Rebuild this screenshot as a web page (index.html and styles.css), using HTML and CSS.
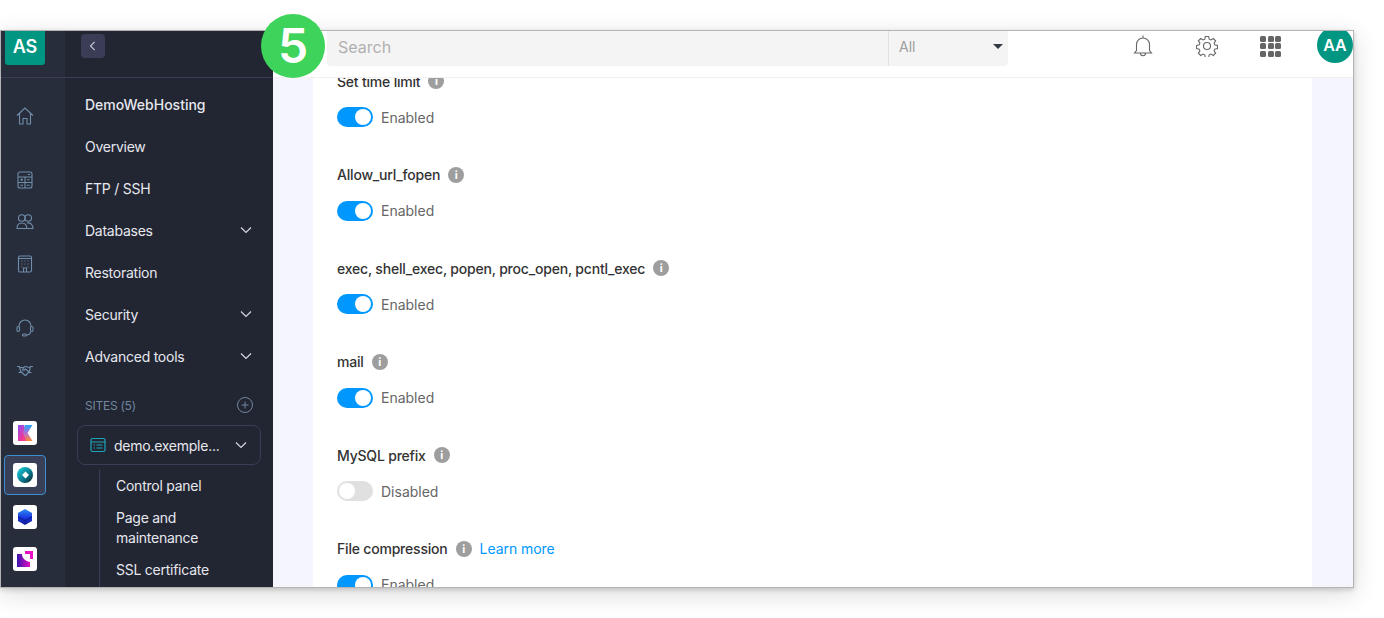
FILE: index.html
```html
<!DOCTYPE html>
<html lang="en">
<head>
    <meta charset="UTF-8">
    <meta name="viewport" content="width=device-width, initial-scale=1.0">
    <title>PHP settings</title>
    <link rel="stylesheet" href="styles.css">
</head>
<body>
    <div class="step-badge">5</div>
    <div class="window">
        <nav class="rail">
            <div class="rail-top"><div class="account-tile">AS</div></div>
            <div class="rail-icons">
                <svg class="rail-icon rail-home" viewBox="0 0 18 18"><path d="M1 8.500 9 1l8 7.500M3.500 6.500V17h3.500v-5.500h4V17h3.500V6.500"/></svg>
                <svg class="rail-icon" viewBox="0 0 18 18"><rect x="2" y="1" width="14" height="16" rx="2"/><path d="M2 6h14M2 11.500h14M9 6v11M4.500 8.700h2.500M11 8.700h2.500M5.700 7.500v2.500M4.500 14.200h2.500M11 14.200h2.500"/><path d="M12 3.500h2"/></svg>
                <svg class="rail-icon" viewBox="0 0 18 18"><circle cx="5.800" cy="5" r="3.300"/><circle cx="12.200" cy="5" r="3.300"/><path d="M1 15.500c0-3.500 2-5.500 4.800-5.500s5 2 5 5.500zM11 10c3.500-.5 6 1.500 6 5.500h-6"/></svg>
                <svg class="rail-icon rail-building" viewBox="0 0 18 18"><rect x="2.500" y="1" width="13" height="16" rx="1.500"/><path d="M2.500 3.500h13M5.500 6h1M8.500 6h1M11.500 6h1M5.500 9h1M8.500 9h1M11.500 9h1M5.500 12h1M11.500 12h1M7.500 17v-4h3v4"/></svg>
                <svg class="rail-icon" viewBox="0 0 18 18"><path d="M3 8V7a6 6 0 0 1 12 0v1M14.500 12.500c0 2.300-1.500 3.400-4 3.500"/><rect x="1" y="7.500" width="2.500" height="5" rx="1.200"/><rect x="14.500" y="7.500" width="2.500" height="5" rx="1.200"/><rect x="6.500" y="15" width="4" height="2" rx="1"/></svg>
                <svg class="rail-icon" viewBox="0 0 18 18"><path d="M1 5.500h2.500l1.500 6H2.500M17 5.500h-2.500l-1.500 6h2.500M3.800 6.500h3.700l1.500-1 5 1M5 10.500 8.500 14l1 .5 3.500-3.500M7.500 6.500 6.500 9c1 .5 2 0 3-1l3.500 3"/></svg>
            </div>
            <div class="rail-sites">
                <div class="site-tile-wrap">
                    <div class="site-tile">
                        <svg viewBox="0 0 16 16">
                            <defs>
                                <linearGradient id="kLeft" x1="0" y1="0" x2="1" y2="1"><stop offset="0" stop-color="#8f4df5"/><stop offset=".6" stop-color="#f0389c"/><stop offset="1" stop-color="#ff4f8a"/></linearGradient>
                                <linearGradient id="kRight" x1="0" y1="0" x2="0" y2="1"><stop offset="0" stop-color="#1fa8f5"/><stop offset=".5" stop-color="#b06ed8"/><stop offset="1" stop-color="#ff8a30"/></linearGradient>
                            </defs>
                            <path d="M1 0h6l5 16H1z" fill="url(#kLeft)"/>
                            <path d="M8 0h7.500L10.500 8l5 8H9.500L6 8z" fill="url(#kRight)"/>
                        </svg>
                    </div>
                </div>
                <div class="site-tile-wrap selected">
                    <div class="site-tile">
                        <svg viewBox="0 0 16 16">
                            <defs>
                                <linearGradient id="ringFill" x1="0" y1="0" x2="1" y2="1"><stop offset="0" stop-color="#1fd4dc"/><stop offset=".55" stop-color="#0a7d92"/><stop offset="1" stop-color="#0c1c28"/></linearGradient>
                            </defs>
                            <circle cx="8" cy="8" r="8" fill="url(#ringFill)"/>
                            <path d="M8.500 4.500 12 8l-3.500 3.500L5 8z" fill="#fff"/>
                        </svg>
                    </div>
                </div>
                <div class="site-tile-wrap">
                    <div class="site-tile">
                        <svg viewBox="0 0 16 16">
                            <defs>
                                <linearGradient id="hexFill" x1="0" y1="0" x2="0" y2="1"><stop offset="0" stop-color="#2f8df5"/><stop offset=".55" stop-color="#1a36e0"/><stop offset="1" stop-color="#101a8c"/></linearGradient>
                            </defs>
                            <path d="M8 0 15 4v8l-7 4-7-4V4z" fill="url(#hexFill)"/>
                            <path d="M1 7 8 11l7-4v1.500l-7 4-7-4z" fill="#0d1f9c"/>
                        </svg>
                    </div>
                </div>
                <div class="site-tile-wrap">
                    <div class="site-tile">
                        <svg viewBox="0 0 16 16">
                            <defs>
                                <linearGradient id="cornerFill" x1="0" y1="0" x2="1" y2="0"><stop offset="0" stop-color="#3a14b0"/><stop offset="1" stop-color="#e010c0"/></linearGradient>
                            </defs>
                            <path d="M8 0h8v8h-3V3H8z" fill="#e80fc4"/>
                            <path d="M0 3h5c0 4 3 7 8 8v5H0z" fill="url(#cornerFill)"/>
                        </svg>
                    </div>
                </div>
            </div>
        </nav>

        <aside class="sidebar">
            <div class="sidebar-top">
                <button class="back-btn"><svg viewBox="0 0 12 12"><path d="M8 1 3 6l5 5"/></svg></button>
            </div>
            <ul class="menu">
                <li class="menu-item menu-title">DemoWebHosting</li>
                <li class="menu-item">Overview</li>
                <li class="menu-item">FTP / SSH</li>
                <li class="menu-item">Databases <svg class="chevron" viewBox="0 0 12 12"><path d="M1 3.500 6 8.500l5-5"/></svg></li>
                <li class="menu-item">Restoration</li>
                <li class="menu-item">Security <svg class="chevron" viewBox="0 0 12 12"><path d="M1 3.500 6 8.500l5-5"/></svg></li>
                <li class="menu-item">Advanced tools <svg class="chevron" viewBox="0 0 12 12"><path d="M1 3.500 6 8.500l5-5"/></svg></li>
            </ul>
            <div class="sites-head">
                <span>SITES (5)</span>
                <svg viewBox="0 0 16 16"><circle cx="8" cy="8" r="7.500"/><path d="M8 4.500v7M4.500 8h7"/></svg>
            </div>
            <div class="site-select">
                <svg class="site-icon" viewBox="0 0 16 16"><rect x="1" y="1.500" width="14" height="13" rx="1.500"/><path d="M1 5h14M3.500 8h1.500M6.500 8h6M3.500 11h1.500M6.500 11h6"/></svg>
                <span class="site-name">demo.exemple...</span>
                <svg class="chevron" viewBox="0 0 12 12"><path d="M1 3.500 6 8.500l5-5"/></svg>
            </div>
            <ul class="submenu">
                <li>Control panel</li>
                <li>Page and maintenance</li>
                <li>SSL certificate</li>
            </ul>
        </aside>

        <div class="main">
            <header class="topbar">
                <div class="search">
                    <div class="search-input">Search</div>
                    <div class="search-filter">All <span class="caret"></span></div>
                </div>
                <div class="top-icons">
                    <svg class="bell-icon" viewBox="0 0 20 22"><path d="M10 .500v2.500M3.500 15.500V9.500a6.500 6.500 0 0 1 13 0v6l2 2.500H1.500zM7.500 18.500c0 3 5 3 5 0"/></svg>
                    <svg class="gear-icon" viewBox="0 0 22 22"><circle cx="11" cy="11" r="3.500"/><path d="M9.300 1.500h3.400l.5 2.700 1.800.8 2.300-1.500 2.300 2.400-1.500 2.200.7 1.800 2.700.6v3l-2.700.6-.7 1.800 1.500 2.200-2.300 2.400-2.300-1.500-1.800.8-.5 2.700H9.300l-.5-2.700-1.800-.8-2.300 1.500-2.300-2.400 1.500-2.200-.7-1.800-2.700-.6v-3l2.700-.6.7-1.800-1.500-2.200 2.300-2.400L7 5l1.800-.8z"/></svg>
                    <div class="apps-grid">
                        <i></i><i></i><i></i><i></i><i></i><i></i><i></i><i></i><i></i>
                    </div>
                    <div class="avatar">AA</div>
                </div>
            </header>

            <div class="page">
                <section class="card">
                    <div class="setting">
                        <div class="setting-label">Set time limit <span class="info">i</span></div>
                        <div class="setting-value"><span class="toggle on"></span> Enabled</div>
                    </div>
                    <div class="setting">
                        <div class="setting-label">Allow_url_fopen <span class="info">i</span></div>
                        <div class="setting-value"><span class="toggle on"></span> Enabled</div>
                    </div>
                    <div class="setting">
                        <div class="setting-label">exec, shell_exec, popen, proc_open, pcntl_exec <span class="info">i</span></div>
                        <div class="setting-value"><span class="toggle on"></span> Enabled</div>
                    </div>
                    <div class="setting">
                        <div class="setting-label">mail <span class="info">i</span></div>
                        <div class="setting-value"><span class="toggle on"></span> Enabled</div>
                    </div>
                    <div class="setting">
                        <div class="setting-label">MySQL prefix <span class="info">i</span></div>
                        <div class="setting-value"><span class="toggle"></span> Disabled</div>
                    </div>
                    <div class="setting">
                        <div class="setting-label">File compression <span class="info">i</span> <a class="learn" href="#">Learn more</a></div>
                        <div class="setting-value"><span class="toggle on"></span> Enabled</div>
                    </div>
                </section>
            </div>
        </div>
    </div>
</body>
</html>
```

FILE: styles.css
```css
body {
    margin: 0;
    height: 618px;
    overflow: hidden;
    position: relative;
    background-color: #fff;
    font-family: Inter, "Liberation Sans", sans-serif;
    font-size: 14px;
}
ul {
    list-style: none;
    margin: 0;
    padding: 0;
}
.step-badge {
    position: absolute;
    left: 261px;
    top: 14px;
    z-index: 5;
    width: 64px;
    height: 64px;
    border-radius: 50%;
    background-color: #3ed35a;
    color: #fff;
    font-size: 48px;
    font-weight: 600;
    line-height: 64px;
    text-align: center;
}
.window {
    display: flex;
    box-sizing: border-box;
    width: 1354px;
    height: 558px;
    margin-top: 30px;
    border: 1px solid #b4b4b4;
    overflow: hidden;
    box-shadow: 0 6px 24px rgba(0, 0, 0, 0.14), 0 2px 5px rgba(0, 0, 0, 0.16);
}

/* icon rail */
.rail {
    flex: 0 0 64px;
    display: flex;
    flex-direction: column;
    background-color: #282d3c;
}
.rail-top {
    height: 46px;
    padding: 0 4px;
    border-bottom: 1px solid #3a3d55;
}
.account-tile {
    width: 40px;
    height: 34px;
    border-radius: 0 0 3px 3px;
    background-color: #009682;
    color: #fff;
    font-size: 18px;
    font-weight: 600;
    line-height: 32px;
    text-align: center;
}
.rail-icons {
    display: flex;
    flex-direction: column;
    align-items: center;
    box-sizing: border-box;
    width: 48px;
    height: 335px;
    padding-top: 29px;
}
.rail-icon {
    flex: none;
    width: 18px;
    height: 18px;
    margin-bottom: 24px;
    fill: none;
    stroke: #6f8da8;
    stroke-width: 1.1;
}
.rail-icon.rail-home,
.rail-icon.rail-building {
    margin-bottom: 46px;
}
.rail-sites {
    display: flex;
    flex-direction: column;
    align-items: center;
    gap: 2px;
    width: 48px;
}
.site-tile-wrap {
    display: flex;
    flex: none;
    align-items: center;
    justify-content: center;
    box-sizing: border-box;
    width: 42px;
    height: 40px;
}
.site-tile-wrap.selected {
    background-color: #3a3f58;
    border: 1px solid #3b8fd0;
    border-radius: 4px;
}
.site-tile {
    display: flex;
    align-items: center;
    justify-content: center;
    width: 24px;
    height: 24px;
    border-radius: 3px;
    background-color: #fff;
}
.site-tile svg {
    display: block;
    width: 16px;
    height: 16px;
}

/* sidebar */
.sidebar {
    flex: 0 0 208px;
    background-color: #222532;
    color: #e6e8ee;
    letter-spacing: -0.25px;
}
.sidebar-top {
    box-sizing: border-box;
    height: 47px;
    padding: 3px 16px;
    border-bottom: 1px solid #3a3d55;
}
.back-btn {
    display: flex;
    align-items: center;
    justify-content: center;
    width: 24px;
    height: 24px;
    padding: 0;
    border: 0;
    border-radius: 4px;
    background-color: #3a3d55;
}
.back-btn svg {
    width: 10px;
    height: 10px;
    fill: none;
    stroke: #c9ccd8;
    stroke-width: 1.3;
}
.menu {
    padding-top: 5px;
}
.menu-item {
    display: flex;
    align-items: center;
    justify-content: space-between;
    height: 42px;
    padding: 0 21px 0 20px;
}
.menu-title {
    font-weight: 500;
    letter-spacing: 0;
}
.chevron {
    width: 12px;
    height: 12px;
    fill: none;
    stroke: #d5d8e0;
    stroke-width: 1.2;
}
.sites-head {
    display: flex;
    align-items: center;
    justify-content: space-between;
    margin-top: 20px;
    padding: 0 20px;
    color: #71879d;
    font-size: 12px;
}
.sites-head svg {
    width: 16px;
    height: 16px;
    fill: none;
    stroke: #71879d;
}
.site-select {
    display: flex;
    align-items: center;
    box-sizing: border-box;
    width: 184px;
    height: 40px;
    margin: 12px 0 0 12px;
    padding: 0 13px 0 12px;
    border: 1px solid #3a3d55;
    border-radius: 8px;
}
.site-icon {
    flex: none;
    width: 16px;
    height: 16px;
    fill: none;
    stroke: #1fa3b8;
    stroke-width: 1.2;
}
.site-name {
    flex: 1;
    margin-left: 8px;
}
.submenu {
    margin: 5px 0 0 34px;
    padding: 0 0 0 16px;
    border-left: 1px solid #3a3d55;
    width: 130px;
    height: 120px;
}
.submenu li {
    padding: 6px 0;
    line-height: 20px;
}

/* main area */
.main {
    flex: 1;
    display: flex;
    flex-direction: column;
    min-width: 0;
    background-color: #f4f5fd;
}
.topbar {
    display: flex;
    align-items: flex-start;
    justify-content: space-between;
    flex: none;
    box-sizing: border-box;
    height: 47px;
    padding-left: 54px;
    background-color: #fff;
    border-bottom: 1px solid #f0f0f0;
    position: relative;
    z-index: 1;
}
.search {
    display: flex;
    width: 681px;
    height: 35px;
    border-radius: 0 0 4px 4px;
    background-color: #f4f4f4;
}
.search-input {
    flex: 1;
    padding-left: 11px;
    border-right: 1px solid #e2e2e2;
    color: #b0b0b0;
    font-size: 16px;
    line-height: 32px;
}
.search-filter {
    display: flex;
    align-items: center;
    justify-content: space-between;
    box-sizing: border-box;
    width: 119px;
    height: 30px;
    padding: 0 5px 0 10px;
    color: #9c9c9c;
}
.caret {
    width: 0;
    height: 0;
    border-left: 5px solid transparent;
    border-right: 5px solid transparent;
    border-top: 5px solid #333a45;
}
.top-icons {
    display: flex;
    align-items: center;
    height: 30px;
}
.bell-icon {
    width: 20px;
    height: 22px;
    margin-right: 43px;
    fill: none;
    stroke: #666;
    stroke-width: 1.1;
}
.gear-icon {
    width: 22px;
    height: 22px;
    margin-right: 42px;
    fill: none;
    stroke: #666;
    stroke-width: 1.1;
}
.apps-grid {
    display: grid;
    flex: none;
    grid-template-columns: repeat(3, 6px);
    grid-auto-rows: 6px;
    gap: 1.500px;
    margin-right: 36px;
}
.apps-grid i {
    background-color: #666;
    border-radius: 1.500px;
}
.avatar {
    flex: none;
    width: 36px;
    height: 36px;
    margin-top: -3px;
    border-radius: 50%;
    background-color: #009682;
    color: #fff;
    font-size: 16px;
    font-weight: 600;
    line-height: 36px;
    text-align: center;
}
.page {
    flex: 1;
    overflow: hidden;
    padding: 0 41px 0 40px;
}
.card {
    margin-top: -7px;
    padding: 0 24px;
    background-color: #fff;
    height: 600px;
}
.setting {
    height: 93.5px;
}
.setting-label {
    display: flex;
    align-items: center;
    gap: 8px;
    height: 20px;
    margin-bottom: 16px;
    color: #333;
    font-weight: 500;
    letter-spacing: -0.2px;
}
.info {
    width: 16px;
    height: 16px;
    border-radius: 50%;
    background-color: #9e9e9e;
    color: #fff;
    font-size: 11px;
    font-weight: 700;
    line-height: 16px;
    text-align: center;
}
.learn {
    color: #0098ff;
    font-weight: 400;
    letter-spacing: -0.05px;
    text-decoration: none;
}
.setting-value {
    display: flex;
    align-items: center;
    gap: 8px;
    height: 20px;
    color: #666;
}
.toggle {
    position: relative;
    box-sizing: border-box;
    width: 36px;
    height: 20px;
    border-radius: 10px;
    background-color: #e0e0e0;
}
.toggle::after {
    content: "";
    position: absolute;
    left: 2px;
    top: 2px;
    width: 16px;
    height: 16px;
    border-radius: 50%;
    background-color: #fff;
}
.toggle.on {
    background-color: #0098ff;
}
.toggle.on::after {
    left: 18px;
}
```
